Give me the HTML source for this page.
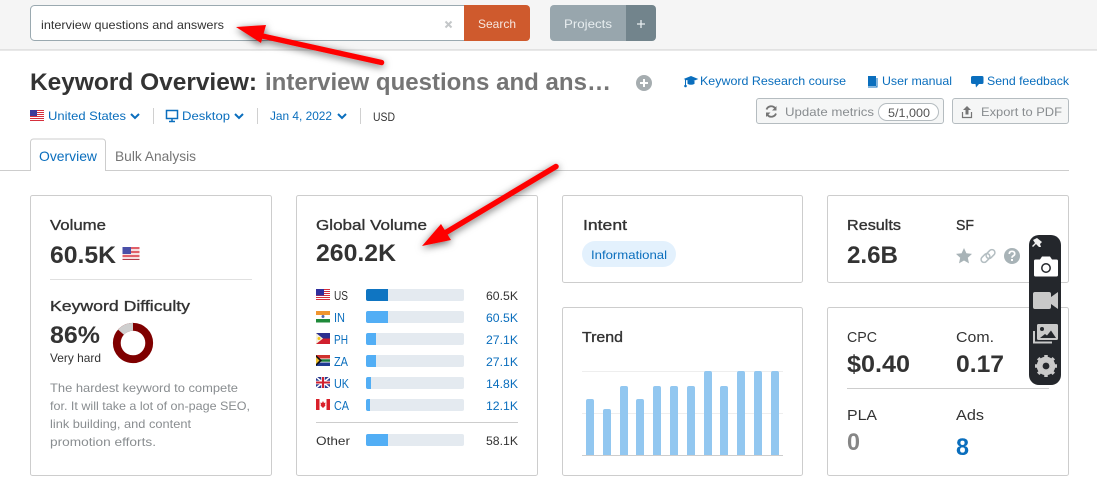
<!DOCTYPE html>
<html><head><meta charset="utf-8"><style>
html,body{margin:0;padding:0;background:#fff;width:1097px;height:486px;overflow:hidden}
svg{display:block}
text{font-family:"Liberation Sans",sans-serif;font-size:12px;fill:#333}
.b{fill:#0a6ebd}
.h{font-size:15px;font-weight:normal;fill:#333;stroke:#333;stroke-width:.35px}
.l{font-size:15px;font-weight:normal;fill:#333}
.n{font-size:24px;font-weight:bold;fill:#333}
.g{fill:#898d90}
.card{fill:#fff;stroke:#cdcdcd;stroke-width:1}
</style></head><body>
<svg width="1097" height="486" viewBox="0 0 1097 486" xmlns="http://www.w3.org/2000/svg">
<defs><filter id="sh" x="-20%" y="-40%" width="140%" height="180%"><feDropShadow dx="0" dy="2" stdDeviation="4" flood-color="#000" flood-opacity=".6"/></filter></defs>
<rect width="1097" height="486" fill="#fff"/>
<!-- header -->
<rect width="1097" height="50" fill="#f5f5f5"/>
<rect y="49.500" width="1097" height="1" fill="#d0d0d0"/>
<rect x="30.500" y="5.500" width="440" height="35" rx="4" fill="#fff" stroke="#9aa9b0"/>
<text x="41" y="29" textLength="183" lengthAdjust="spacingAndGlyphs">interview questions and answers</text>
<path d="M445.500 21.500l6 6m0-6l-6 6" stroke="#c4c7c9" stroke-width="2"/>
<path d="M464 5h62a4 4 0 0 1 4 4v28a4 4 0 0 1-4 4h-62z" fill="#cf5a2d"/>
<text x="478" y="28" textLength="38" lengthAdjust="spacingAndGlyphs" style="fill:#f6e6df">Search</text>
<path d="M554 5h72v36h-72a4 4 0 0 1-4-4V9a4 4 0 0 1 4-4z" fill="#98a6ad"/>
<path d="M626 5h26a4 4 0 0 1 4 4v28a4 4 0 0 1-4 4h-26z" fill="#72848c"/>
<text x="564" y="28" textLength="48" lengthAdjust="spacingAndGlyphs" style="fill:#e8eef0">Projects</text>
<path d="M637 24h8m-4-4v8" stroke="#e8eef0" stroke-width="1.300"/>
<!-- title -->
<text x="30" y="90" textLength="227" lengthAdjust="spacingAndGlyphs" style="font-size:24px;font-weight:bold;fill:#333">Keyword Overview:</text>
<text x="265" y="90" textLength="346" lengthAdjust="spacingAndGlyphs" style="font-size:24px;font-weight:bold;fill:#757575">interview questions and ans…</text>
<circle cx="644" cy="83" r="8" fill="#a6adb0"/><path d="M640 83h8m-4-4v8" stroke="#fff" stroke-width="2"/>
<!-- top links -->
<path d="M685 79l6-2.500 6 2.500-6 2.500zM688 81v2.500q3 1.500 6 0V81" fill="#0a6ebd" stroke="#0a6ebd" stroke-width="1"/><path d="M685.500 79v6" stroke="#0a6ebd"/><circle cx="685.500" cy="86" r="1.300" fill="#0a6ebd"/>
<text class="b" x="700" y="85" textLength="146" lengthAdjust="spacingAndGlyphs">Keyword Research course</text>
<path d="M868 76h8v10h-8z" fill="#0a6ebd"/><path d="M868 87h9V78" stroke="#0a6ebd" fill="none"/>
<text class="b" x="882" y="85" textLength="70" lengthAdjust="spacingAndGlyphs">User manual</text>
<path d="M973 76h9q1.500 0 1.500 1.500v5q0 1.500-1.500 1.500h-3l-3 3.500-.5-3.500h-2.500q-2 0-2-1.500v-5q0-1.500 2-1.500z" fill="#0a6ebd"/>
<text class="b" x="987" y="85" textLength="82" lengthAdjust="spacingAndGlyphs">Send feedback</text>
<!-- buttons -->
<rect x="756.500" y="98.500" width="187" height="25" rx="2.500" fill="#f5f6f6" stroke="#b5bcc0"/>
<path d="M766.500 109.500a5 5 0 0 1 8.500-1.500M776 113.500a5 5 0 0 1-8.500 1.500" fill="none" stroke="#757575" stroke-width="1.800"/>
<path d="M776.500 106v4.500h-4.500zM766 117v-4.500h4.500z" fill="#757575"/>
<text x="785" y="116" textLength="89" lengthAdjust="spacingAndGlyphs" class="g">Update metrics</text>
<rect x="878.500" y="103.500" width="60" height="17" rx="8.500" fill="#fff" stroke="#b5bcc0"/>
<text x="888" y="117" textLength="42" lengthAdjust="spacingAndGlyphs" style="fill:#555">5/1,000</text>
<rect x="952.500" y="98.500" width="116" height="25" rx="2.500" fill="#f5f6f6" stroke="#b5bcc0"/>
<path d="M967 106l-4 4h2.500v4.500h3V110h2.500z" fill="#757575"/><path d="M962.500 112v5.500h9V112" fill="none" stroke="#757575" stroke-width="1.200"/>
<text x="981" y="116" textLength="81" lengthAdjust="spacingAndGlyphs" class="g">Export to PDF</text>
<!-- filters -->
<g>
<rect x="30" y="110" width="14" height="11" fill="#fff"/>
<path d="M30 110.500h14M30 112.500h14M30 114.500h14M30 116.500h14M30 118.500h14M30 120.500h14" stroke="#d6303c"/>
<rect x="30" y="110" width="7" height="6" fill="#3c3b9a"/>
</g>
<text class="b" x="48" y="120" textLength="78" lengthAdjust="spacingAndGlyphs">United States</text>
<path d="M131 114l4 4 4-4" fill="none" stroke="#0a6ebd" stroke-width="2"/>
<rect x="153" y="108" width="1" height="16" fill="#d0d0d0"/>
<rect x="166.500" y="110.500" width="11" height="8" fill="none" stroke="#0a6ebd" stroke-width="1.500"/><path d="M169 121.500h6M172 118v3" stroke="#0a6ebd" stroke-width="1.500"/>
<text class="b" x="182" y="120" textLength="48" lengthAdjust="spacingAndGlyphs">Desktop</text>
<path d="M235 114l4 4 4-4" fill="none" stroke="#0a6ebd" stroke-width="2"/>
<rect x="257" y="108" width="1" height="16" fill="#d0d0d0"/>
<text class="b" x="270" y="120" textLength="62" lengthAdjust="spacingAndGlyphs">Jan 4, 2022</text>
<path d="M338 114l4 4 4-4" fill="none" stroke="#0a6ebd" stroke-width="2"/>
<rect x="360" y="108" width="1" height="16" fill="#d0d0d0"/>
<text x="373" y="121" textLength="22" lengthAdjust="spacingAndGlyphs">USD</text>
<!-- tabs -->
<rect x="0" y="170" width="1069" height="1" fill="#cdcdcd"/>
<path d="M30.500 171v-29a3 3 0 0 1 3-3h69a3 3 0 0 1 3 3v29" fill="#fff" stroke="#cdcdcd"/>
<rect x="31" y="170" width="74" height="1.500" fill="#fff"/>
<text class="b" x="39" y="161" textLength="58" lengthAdjust="spacingAndGlyphs" style="font-size:14px">Overview</text>
<text x="115" y="161" textLength="81" lengthAdjust="spacingAndGlyphs" style="font-size:14px;fill:#757575">Bulk Analysis</text>
<!-- cards -->
<rect class="card" x="30.500" y="195.500" width="241" height="280" rx="2"/>
<rect class="card" x="296.500" y="195.500" width="241" height="280" rx="2"/>
<rect class="card" x="562.500" y="195.500" width="240" height="87" rx="2"/>
<rect class="card" x="562.500" y="307.500" width="240" height="168" rx="2"/>
<rect class="card" x="827.500" y="195.500" width="241" height="87" rx="2"/>
<rect class="card" x="827.500" y="307.500" width="241" height="168" rx="2"/>
<!-- volume -->
<text class="h" x="50" y="230" textLength="56" lengthAdjust="spacingAndGlyphs">Volume</text>
<text class="n" x="50" y="263" textLength="66" lengthAdjust="spacingAndGlyphs">60.5K</text>
<g><rect x="122.500" y="247" width="17" height="13" fill="#f7dfe0"/><rect x="122.500" y="247" width="17" height="2" fill="#e0606a"/><rect x="122.500" y="251" width="17" height="2" fill="#e0606a"/><rect x="122.500" y="255" width="17" height="2" fill="#e0606a"/><rect x="122.500" y="259" width="17" height="1" fill="#b03a48"/><rect x="122.500" y="247" width="8.500" height="7" fill="#4a4fa8"/></g>
<rect x="50" y="279" width="202" height="1" fill="#e0e0e0"/>
<text class="h" x="50" y="311" textLength="140" lengthAdjust="spacingAndGlyphs">Keyword Difficulty</text>
<text class="n" x="50" y="343" textLength="50" lengthAdjust="spacingAndGlyphs">86%</text>
<text x="50" y="362" textLength="51" lengthAdjust="spacingAndGlyphs">Very hard</text>
<circle cx="133" cy="343" r="16.200" fill="none" stroke="#7f0000" stroke-width="7.800"/>
<path d="M133 326.800A16.200 16.200 0 0 0 121 332.200" fill="none" stroke="#cfcfcf" stroke-width="7.800"/>
<text class="g" x="50" y="392" textLength="188" lengthAdjust="spacingAndGlyphs">The hardest keyword to compete</text>
<text class="g" x="50" y="410" textLength="200" lengthAdjust="spacingAndGlyphs">for. It will take a lot of on-page SEO,</text>
<text class="g" x="50" y="428" textLength="141" lengthAdjust="spacingAndGlyphs">link building, and content</text>
<text class="g" x="50" y="446" textLength="106" lengthAdjust="spacingAndGlyphs">promotion efforts.</text>
<!-- global -->
<text class="h" x="316" y="230" textLength="111" lengthAdjust="spacingAndGlyphs">Global Volume</text>
<text class="n" x="316" y="261" textLength="80" lengthAdjust="spacingAndGlyphs">260.2K</text>
<!-- flags -->
<g><rect x="316" y="289" width="14" height="11" fill="#fff"/><path d="M316 289.500h14M316 291.500h14M316 293.500h14M316 295.500h14M316 297.500h14M316 299.500h14" stroke="#d6303c"/><rect x="316" y="289" width="8" height="6.500" fill="#2f2f9e"/></g>
<g><rect x="316" y="311" width="14" height="4" fill="#f0952f"/><rect x="316" y="315" width="14" height="4" fill="#fff"/><rect x="316" y="319" width="14" height="3.500" fill="#1f8a3a"/><circle cx="323" cy="316.500" r="1.500" fill="#5566aa"/></g>
<g><rect x="316" y="333" width="14" height="5.500" fill="#2b2f8f"/><rect x="316" y="338.500" width="14" height="5.500" fill="#d0202e"/><path d="M316 333l7 5.500-7 5.500z" fill="#f5f0e0"/><circle cx="319" cy="338.500" r="1.500" fill="#f5c518"/></g>
<g><rect x="316" y="355" width="14" height="11" fill="#fff"/><rect x="316" y="355" width="14" height="3.500" fill="#d0312d"/><rect x="316" y="362.500" width="14" height="3.500" fill="#1f3a93"/><path d="M316 360.500h14" stroke="#1a7a3c" stroke-width="2.500"/><path d="M316 355l6 5.500-6 5.500z" fill="#111"/><path d="M316 357l3.500 3.500-3.500 3.500z" fill="#f0c030"/></g>
<g><rect x="316" y="377" width="14" height="11" fill="#2b3b8f"/><path d="M316 377l14 11m0-11l-14 11" stroke="#fff" stroke-width="1.500"/><path d="M323 377v11M316 382.500h14" stroke="#fff" stroke-width="3.500"/><path d="M323 377v11M316 382.500h14" stroke="#d0202e" stroke-width="2"/></g>
<g><rect x="316" y="399" width="14" height="11" fill="#fff"/><rect x="316" y="399" width="3.500" height="11" fill="#d9202a"/><rect x="326.500" y="399" width="3.500" height="11" fill="#d9202a"/><path d="M323 401l1 2 1.500-.5-.5 3 1-.5-3 3-3-3 1 .5-.5-3 1.500.5z" fill="#d9202a"/></g>
<g>
<text x="334" y="300" textLength="14" lengthAdjust="spacingAndGlyphs" style="font-size:13px">US</text>
<text class="b" x="334" y="322" textLength="11" lengthAdjust="spacingAndGlyphs" style="font-size:13px">IN</text>
<text class="b" x="334" y="344" textLength="14" lengthAdjust="spacingAndGlyphs" style="font-size:13px">PH</text>
<text class="b" x="334" y="366" textLength="14" lengthAdjust="spacingAndGlyphs" style="font-size:13px">ZA</text>
<text class="b" x="334" y="388" textLength="15" lengthAdjust="spacingAndGlyphs" style="font-size:13px">UK</text>
<text class="b" x="334" y="410" textLength="15" lengthAdjust="spacingAndGlyphs" style="font-size:13px">CA</text>
<text x="316" y="445" textLength="34" lengthAdjust="spacingAndGlyphs">Other</text>
<text x="486" y="300" textLength="32" lengthAdjust="spacingAndGlyphs">60.5K</text>
<text class="b" x="486" y="322" textLength="32" lengthAdjust="spacingAndGlyphs">60.5K</text>
<text class="b" x="486" y="344" textLength="32" lengthAdjust="spacingAndGlyphs">27.1K</text>
<text class="b" x="486" y="366" textLength="32" lengthAdjust="spacingAndGlyphs">27.1K</text>
<text class="b" x="486" y="388" textLength="32" lengthAdjust="spacingAndGlyphs">14.8K</text>
<text class="b" x="486" y="410" textLength="32" lengthAdjust="spacingAndGlyphs">12.1K</text>
<text x="486" y="445" textLength="32" lengthAdjust="spacingAndGlyphs">58.1K</text>
</g>
<g fill="#e4eaf0">
<rect x="366" y="289" width="98" height="12" rx="2"/><rect x="366" y="311" width="98" height="12" rx="2"/><rect x="366" y="333" width="98" height="12" rx="2"/><rect x="366" y="355" width="98" height="12" rx="2"/><rect x="366" y="377" width="98" height="12" rx="2"/><rect x="366" y="399" width="98" height="12" rx="2"/><rect x="366" y="434" width="98" height="12" rx="2"/>
</g>
<path d="M388 289h-20a2 2 0 0 0-2 2v8a2 2 0 0 0 2 2h20z" fill="#0f75c2"/>
<g fill="#52aef5">
<path d="M388 311h-20a2 2 0 0 0-2 2v8a2 2 0 0 0 2 2h20z"/>
<path d="M376 333h-8a2 2 0 0 0-2 2v8a2 2 0 0 0 2 2h8z"/>
<path d="M376 355h-8a2 2 0 0 0-2 2v8a2 2 0 0 0 2 2h8z"/>
<path d="M371 377h-3a2 2 0 0 0-2 2v8a2 2 0 0 0 2 2h3z"/>
<path d="M370 399h-2a2 2 0 0 0-2 2v8a2 2 0 0 0 2 2h2z"/>
<path d="M388 434h-20a2 2 0 0 0-2 2v8a2 2 0 0 0 2 2h20z"/>
</g>
<rect x="316" y="422" width="202" height="1" fill="#cdcdcd"/>
<!-- intent -->
<text class="h" x="583" y="230" textLength="44" lengthAdjust="spacingAndGlyphs">Intent</text>
<rect x="582" y="241" width="94" height="26" rx="13" fill="#e3f1fd"/>
<text class="b" x="591" y="259" textLength="76" lengthAdjust="spacingAndGlyphs">Informational</text>
<!-- trend -->
<text class="h" x="582" y="342" textLength="41" lengthAdjust="spacingAndGlyphs">Trend</text>
<rect x="582" y="371" width="201" height="1" fill="#eeeeee"/>
<rect x="582" y="413" width="201" height="1" fill="#eeeeee"/>
<g fill="#92c7f0">
<path d="M586 455v-54a2 2 0 0 1 2-2h4a2 2 0 0 1 2 2v54z"/>
<path d="M603 455v-44a2 2 0 0 1 2-2h4a2 2 0 0 1 2 2v44z"/>
<path d="M620 455v-67a2 2 0 0 1 2-2h4a2 2 0 0 1 2 2v67z"/>
<path d="M636 455v-54a2 2 0 0 1 2-2h4a2 2 0 0 1 2 2v54z"/>
<path d="M653 455v-67a2 2 0 0 1 2-2h4a2 2 0 0 1 2 2v67z"/>
<path d="M670 455v-67a2 2 0 0 1 2-2h4a2 2 0 0 1 2 2v67z"/>
<path d="M687 455v-67a2 2 0 0 1 2-2h4a2 2 0 0 1 2 2v67z"/>
<path d="M704 455v-82a2 2 0 0 1 2-2h4a2 2 0 0 1 2 2v82z"/>
<path d="M720 455v-67a2 2 0 0 1 2-2h4a2 2 0 0 1 2 2v67z"/>
<path d="M737 455v-82a2 2 0 0 1 2-2h4a2 2 0 0 1 2 2v82z"/>
<path d="M754 455v-82a2 2 0 0 1 2-2h4a2 2 0 0 1 2 2v82z"/>
<path d="M771 455v-82a2 2 0 0 1 2-2h4a2 2 0 0 1 2 2v82z"/>
</g>
<rect x="582" y="455" width="201" height="1" fill="#cdcdcd"/>
<!-- results -->
<text class="h" x="847" y="230" textLength="54" lengthAdjust="spacingAndGlyphs">Results</text>
<text class="h" x="956" y="230" textLength="18" lengthAdjust="spacingAndGlyphs">SF</text>
<text class="n" x="847" y="263" textLength="51" lengthAdjust="spacingAndGlyphs">2.6B</text>
<path d="M964 248l2.400 5.300 5.600.600-4.200 3.800 1.200 5.700-5-2.900-5 2.900 1.200-5.700-4.200-3.800 5.600-.600z" fill="#a8b3b7"/>
<g fill="none" stroke="#b4bec2" stroke-width="1.500"><rect x="980.500" y="255" width="10" height="6" rx="3" transform="rotate(-45 985.500 258)"/><rect x="985.500" y="251" width="10" height="6" rx="3" transform="rotate(-45 990.500 254)"/></g>
<circle cx="1012" cy="256" r="8" fill="#a8b3b7"/>
<path d="M1009.300 254q0-2.700 2.700-2.700t2.700 2.500q0 1.300-1.500 2.100-1.200.7-1.200 1.900" fill="none" stroke="#fff" stroke-width="1.700"/><rect x="1011" y="259" width="2" height="2" fill="#fff"/>
<!-- cpc -->
<text class="l" x="847" y="342" textLength="30" lengthAdjust="spacingAndGlyphs">CPC</text>
<text class="l" x="956" y="342" textLength="38" lengthAdjust="spacingAndGlyphs">Com.</text>
<text class="n" x="847" y="372" textLength="63" lengthAdjust="spacingAndGlyphs">$0.40</text>
<text class="n" x="956" y="372" textLength="48" lengthAdjust="spacingAndGlyphs">0.17</text>
<rect x="847" y="388" width="202" height="1" fill="#cdcdcd"/>
<text class="l" x="847" y="420" textLength="30" lengthAdjust="spacingAndGlyphs">PLA</text>
<text class="l" x="956" y="420" textLength="28" lengthAdjust="spacingAndGlyphs">Ads</text>
<text class="n" x="847" y="450" textLength="13" lengthAdjust="spacingAndGlyphs" style="fill:#868686">0</text>
<text class="n" x="956" y="455" textLength="13" lengthAdjust="spacingAndGlyphs" style="fill:#0a6ebd">8</text>
<!-- toolbar -->
<rect x="1029" y="235" width="32" height="150" rx="10" fill="#24272c"/>
<path d="M1037 238l5 4-2 2 1 3-2 0-3-3-3 3-1-1 3-3-2-3z" fill="#f2f2f2"/>
<path d="M1034 261a1.500 1.500 0 0 1 1.500-1.500h4.500l2-3h8l2 3h4.500a1.500 1.500 0 0 1 1.500 1.500v14a1.500 1.500 0 0 1-1.500 1.500h-21a1.500 1.500 0 0 1-1.500-1.500z" fill="#fff"/>
<circle cx="1046" cy="268" r="4.200" fill="none" stroke="#24272c" stroke-width="1.500"/>
<path d="M1033 294a2 2 0 0 1 2-2h14a2 2 0 0 1 2 2v3l7-5v17l-7-5v3a2 2 0 0 1-2 2h-14a2 2 0 0 1-2-2z" fill="#c9c9c9"/>
<path d="M1034 331v11.500h18" fill="none" stroke="#c9c9c9" stroke-width="2"/>
<rect x="1037" y="324" width="21" height="16" rx="1.500" fill="#c9c9c9"/>
<circle cx="1042" cy="329" r="2" fill="#24272c"/>
<path d="M1040 338l5-4 2 1.500 4-5 5 7.500z" fill="#24272c"/>
<circle cx="1046" cy="366" r="7" fill="none" stroke="#c9c9c9" stroke-width="4.500"/>
<path d="M1046 355v22M1035 366h22M1038.200 358.200l15.600 15.600M1053.800 358.200l-15.600 15.600" stroke="#c9c9c9" stroke-width="3.500"/>
<circle cx="1046" cy="366" r="3.400" fill="#24272c"/>
<!-- arrows -->
<g filter="url(#sh)">
<path d="M260 35.500L381.500 62.500" stroke="#fe0000" stroke-width="5.500" stroke-linecap="round" fill="none"/>
<path d="M236 27L266 25 261 43z" fill="#fe0000"/>
<path d="M445 233L556 166.500" stroke="#fe0000" stroke-width="5.500" stroke-linecap="round" fill="none"/>
<path d="M422 246L441 224 451 240z" fill="#fe0000"/>
</g>
</svg>
</body></html>
